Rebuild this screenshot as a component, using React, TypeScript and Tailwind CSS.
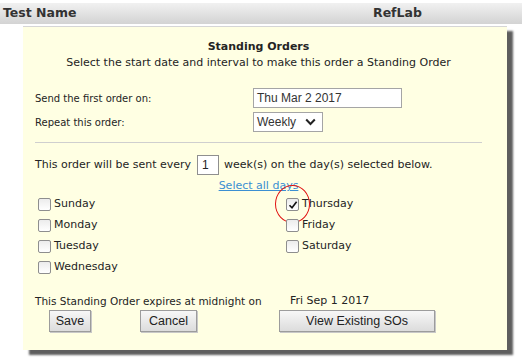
import React from 'react';

const days = [
  ['Sunday', 'Thursday'],
  ['Monday', 'Friday'],
  ['Tuesday', 'Saturday'],
  ['Wednesday', ''],
];

function CheckBox({ checked }: { checked?: boolean }) {
  return (
    <span className="relative flex h-[13px] w-[13px] shrink-0 items-center justify-center rounded-[2px] border border-[#8e8e8e] bg-gradient-to-b from-[#ececec] to-white">
      {checked && (
        <svg width="10" height="10" viewBox="0 0 10 10">
          <path d="M1.5 5.2 L4 7.8 L8.6 1.8" fill="none" stroke="#111" strokeWidth={1.6} />
        </svg>
      )}
      {checked && (
        <span className="absolute left-[-12px] top-[-14px] h-[38px] w-[35px] rounded-[50%] border-[1.5px] border-[#e01010]" />
      )}
    </span>
  );
}

function Day({ name, checked }: { name: string; checked?: boolean }) {
  if (!name) return <div className="h-[21px]" />;
  return (
    <div className="flex h-[21px] items-center">
      <CheckBox checked={checked} />
      <span className="ml-[3px] text-[11px]">{name}</span>
    </div>
  );
}

function Button({ label, className }: { label: string; className: string }) {
  return (
    <button
      className={`h-[22px] border border-[#9c9c9c] bg-gradient-to-b from-[#f7f7f7] to-[#dcdcdc] font-['Liberation_Sans',Arial,sans-serif] text-[12.5px] text-[#222] shadow-[1px_1px_0_#c8c8c8] ${className}`}
    >
      {label}
    </button>
  );
}

export default function App() {
  return (
    <div className="h-[362px] w-[522px] overflow-hidden bg-white pt-[3px] font-['DejaVu_Sans',Verdana,sans-serif] text-[#242424]">
      {/* grid header */}
      <div className="flex h-[21px] items-center bg-gradient-to-b from-[#f1f1f1] to-[#d3d3d3] text-[12.5px] font-bold text-[#333]">
        <span className="w-[373px] pl-[3px]">Test Name</span>
        <span>RefLab</span>
      </div>

      {/* standing order panel */}
      <div className="ml-[23px] mt-[2px] h-[324px] w-[484px] border-t border-[#d6d6d6] bg-[#ffffe3] pl-[12px] pr-[25px] pt-[12px] shadow-[6px_5px_2px_#5e5e5e]">
        <div className="text-center text-[11px] font-bold leading-[16px]">Standing Orders</div>
        <div className="text-center text-[11px] leading-[16px]">
          Select the start date and interval to make this order a Standing Order
        </div>

        <div className="mt-[17px] flex h-[20px] items-center">
          <span className="w-[218px] text-[10px]">Send the first order on:</span>
          <div className="flex h-[20px] w-[149px] items-center border border-[#a5a5a5] bg-white pl-[3px] font-['Liberation_Sans',Arial,sans-serif] text-[12px] text-[#333]">
            Thu Mar 2 2017
          </div>
        </div>
        <div className="mt-[4px] flex h-[20px] items-center">
          <span className="w-[218px] text-[10px]">Repeat this order:</span>
          <div className="flex h-[20px] w-[70px] items-center justify-between border border-[#a5a5a5] bg-white pl-[3px] pr-[6px] font-['Liberation_Sans',Arial,sans-serif] text-[12px] text-[#333]">
            Weekly
            <svg width="11" height="8" viewBox="0 0 11 8">
              <path d="M1.2 1.5 L5.5 6 L9.8 1.5" fill="none" stroke="#222" strokeWidth={2} />
            </svg>
          </div>
        </div>

        <div className="mt-[10px] h-px bg-[#cfcfcf]" />

        <div className="mt-[12px] flex h-[20px] items-center text-[11px]">
          <span className="w-[162px]">This order will be sent every</span>
          <div className="flex h-[20px] w-[22px] items-center border border-[#8f8f8f] bg-white pl-[4px] font-['Liberation_Sans',Arial,sans-serif] text-[12px]">
            1
          </div>
          <span className="ml-[5px]">week(s) on the day(s) selected below.</span>
        </div>

        <div className="mt-[4px] text-center text-[11px] leading-[14px]">
          <span className="text-[#3b8fd2] underline">Select all days</span>
        </div>

        <div className="mt-[1px] flex">
          <div className="w-[251px] pl-[3px]">
            {days.map((d) => (
              <Day key={d[0]} name={d[0]} />
            ))}
          </div>
          <div>
            {days.map((d, i) => (
              <Day key={i} name={d[1]} checked={d[1] === 'Thursday'} />
            ))}
          </div>
        </div>

        <div className="mt-[16px] flex leading-[14px]">
          <span className="w-[255px] text-[10.5px]">This Standing Order expires at midnight on</span>
          <span className="text-[11px]">Fri Sep 1 2017</span>
        </div>

        <div className="mt-[2px] flex">
          <Button label="Save" className="ml-[14px] w-[42px]" />
          <Button label="Cancel" className="ml-[49px] w-[57px]" />
          <Button label="View Existing SOs" className="ml-[82px] w-[156px]" />
        </div>
      </div>
    </div>
  );
}
